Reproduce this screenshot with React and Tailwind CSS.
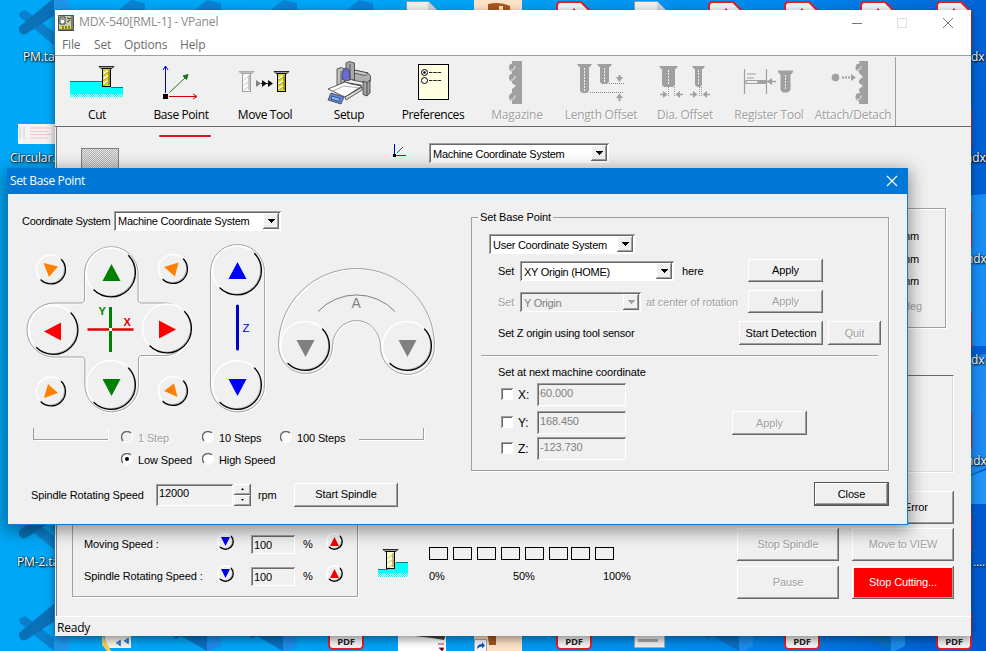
import React from 'react';

const RAISED =
  'bg-[#f0f0f0] shadow-[inset_-1px_-1px_0_#696969,inset_1px_1px_0_#ffffff,inset_-2px_-2px_0_#a0a0a0]';
const SUNKEN =
  'shadow-[inset_1px_1px_0_#a0a0a0,inset_-1px_-1px_0_#ffffff,inset_2px_2px_0_#696969]';

function Button({ children, disabled, className = '' }) {
  return (
    <button
      className={`${RAISED} flex shrink-0 items-center justify-center whitespace-nowrap ${
        disabled ? 'text-[#a0a0a0] [text-shadow:1px_1px_0_#fff]' : 'text-black'
      } ${className}`}
    >
      {children}
    </button>
  );
}

function Select({ children, disabled, className = '' }) {
  return (
    <div
      className={`${SUNKEN} flex h-5 shrink-0 items-center p-[2px] pl-1 tracking-[-0.27px] whitespace-nowrap ${
        disabled ? 'bg-[#f0f0f0] text-[#808080]' : 'bg-white text-black'
      } ${className}`}
    >
      <span className="flex-1 pt-[2px]">{children}</span>
      <span className={`${RAISED} flex h-4 w-4 items-center justify-center`}>
        <svg width="7" height="4" viewBox="0 0 7 4" shapeRendering="crispEdges">
          <path d="M0 0h7L3.5 4z" fill={disabled ? '#a0a0a0' : '#000'} />
        </svg>
      </span>
    </div>
  );
}

function Field({ children, disabled, className = '' }) {
  return (
    <div
      className={`${SUNKEN} shrink-0 bg-[#f0f0f0] pl-[3px] ${
        disabled ? 'text-[#808080]' : 'text-black'
      } ${className}`}
    >
      {children}
    </div>
  );
}

function Radio({ children, checked, disabled, className = '' }) {
  return (
    <label
      className={`flex shrink-0 items-center gap-[5px] whitespace-nowrap ${
        disabled ? 'text-[#a0a0a0] [text-shadow:1px_1px_0_#fff]' : 'text-black'
      } ${className}`}
    >
      <svg width="12" height="12" viewBox="0 0 12 12" className="mb-[2px]">
        <circle cx="6" cy="6" r="5" fill={disabled ? '#f0f0f0' : '#fff'} />
        <path d="M9.9 2.1A5.5 5.5 0 0 0 2.1 9.9" fill="none" stroke="#696969" strokeWidth="1.4" />
        <path d="M2.1 9.9A5.5 5.5 0 0 0 9.9 2.1" fill="none" stroke="#fff" strokeWidth="1" />
        {checked && <circle cx="6" cy="6" r="2" fill="#000" />}
      </svg>
      <span className="pt-px">{children}</span>
    </label>
  );
}

function RoundKey({ cx, cy, r }) {
  const a = r * 0.7071;
  return (
    <g fill="none">
      <circle cx={cx} cy={cy} r={r} fill="#f0f0f0" stroke="#fff" strokeWidth="1.5" />
      <path
        d={`M${cx + a} ${cy - a}A${r} ${r} 0 0 1 ${cx - a} ${cy + a}`}
        stroke="#b0b0b0"
        strokeWidth="1"
        transform="translate(-.8 -.8)"
      />
      <path d={`M${cx + a} ${cy - a}A${r} ${r} 0 0 1 ${cx - a} ${cy + a}`} stroke="#000" strokeWidth="1.3" />
    </g>
  );
}

function Outline({ d }) {
  return (
    <g fill="none">
      <path d={d} stroke="#fff" strokeWidth="1.2" transform="translate(1 1)" />
      <path d={d} stroke="#a5a29a" strokeWidth="1" />
    </g>
  );
}

function XYPad() {
  return (
    <svg width="180" height="178" viewBox="22 240 180 178" className="shrink-0">
      <Outline d="M84.500 301V273.500a26.800 26.800 0 0 1 53.600 0V301l2 2H167a26.500 26.500 0 0 1 0 52.500h-26.500l-2 2V385a26.800 26.800 0 0 1-53.600 0v-26l-2-2H54a27 27 0 0 1 0-54h28.500z" />
      <RoundKey cx={111} cy={272.5} r={24.5} />
      <RoundKey cx={53.5} cy={330} r={24.5} />
      <RoundKey cx={167} cy={328.5} r={24.5} />
      <RoundKey cx={111} cy={385} r={24.5} />
      <RoundKey cx={51} cy={269.500} r={14.5} />
      <RoundKey cx={173} cy={269} r={14.5} />
      <RoundKey cx={51} cy={391.500} r={14.5} />
      <RoundKey cx={173} cy={391} r={14.5} />
      <path d="M111.500 264l9 17h-18z" fill="#008000" />
      <path d="M111.500 396l9-17h-18z" fill="#008000" />
      <path d="M44 331.500l17-9v18z" fill="#f00" />
      <path d="M176 329.500l-17-9v18z" fill="#f00" />
      <g fill="#ff8000">
        <path d="M43.500 263l14.500 3.500-9 10.500z" />
        <path d="M164 267l14.500-4.500-3.500 14z" />
        <path d="M48 384l10 9-14 5z" />
        <path d="M174 383.500l-10 7.500 13.500 6z" />
      </g>
      <path d="M110.500 307v45" stroke="#008000" strokeWidth="3" />
      <path d="M87.500 329.500h46" stroke="#e00000" strokeWidth="2.500" />
      <rect x="109" y="328" width="3" height="3" fill="#fff" />
      <g fontFamily="Liberation Sans, sans-serif" fontWeight="bold" fontSize="11">
        <text x="98.500" y="315" fill="#008000">Y</text>
        <text x="123.500" y="326" fill="#e00000">X</text>
      </g>
    </svg>
  );
}

function ZPad() {
  return (
    <svg width="66" height="178" viewBox="202 240 66 178" className="shrink-0">
      <Outline d="M210.500 271.500a27 27 0 0 1 54 0V385a27 27 0 0 1-54 0z" />
      <RoundKey cx={237} cy={270.5} r={24.5} />
      <RoundKey cx={237} cy={385} r={24.5} />
      <path d="M237.500 262l9 17h-18z" fill="#00f" />
      <path d="M237.500 396l9-17h-18z" fill="#00f" />
      <path d="M237.500 306v43" stroke="#0000c8" strokeWidth="3" strokeLinecap="round" />
      <text x="242.500" y="332" fontFamily="Liberation Sans, sans-serif" fontSize="11.500" fill="#0000e0">
        Z
      </text>
    </svg>
  );
}

function APad() {
  return (
    <svg width="172" height="178" viewBox="268 240 172 178" className="shrink-0">
      <Outline d="M278.500 345.500A78 77 0 0 1 434.500 345.500a27 28 0 0 1-54 2A24 26 0 0 0 332.500 345.500a27 28 0 0 1-54 0z" />
      <RoundKey cx={305} cy={346} r={24.5} />
      <RoundKey cx={407} cy={346} r={24.5} />
      <path d="M305.500 357l9-17h-18z" fill="#808080" />
      <path d="M407.500 357l9-17h-18z" fill="#808080" />
      <path d="M318 311.500a53 53 0 0 1 77 0" fill="none" stroke="#808080" />
      <text x="351.500" y="308" fontFamily="Liberation Sans, sans-serif" fontSize="14" fill="#808080">
        A
      </text>
    </svg>
  );
}

function Mill({ x, y, w = 9, h = 19, body = '#ded82c', shade = '#8a8410', edge = '#000', cap = '#a0a0a0' }) {
  return (
    <g>
      <path d={`M${x - 3} ${y + 0.5}h${w + 6}l-2 2h-${w + 2}z`} fill={cap} stroke={edge} strokeWidth=".8" />
      <rect x={x + 0.5} y={y + 2.5} width={w - 1} height={h - 1} fill={body} stroke={edge} />
      <path d={`M${x + w - 2} ${y + 4}v${h - 4}`} stroke={shade} strokeWidth="1.500" />
      <path
        d={`M${x + 1.5} ${y + 8}l${w - 4.5} -3M${x + 1.5} ${y + 13}l${w - 4.5} -3M${x + 1.5} ${y + 18}l${w - 4.5} -3`}
        stroke="#fff"
        strokeWidth="1.600"
      />
      <path
        d={`M${x + 1.5} ${y + 9}l${w - 4.5} -3M${x + 1.5} ${y + 14}l${w - 4.5} -3M${x + 1.5} ${y + 19}l${w - 4.5} -3`}
        stroke={shade}
        strokeWidth=".7"
      />
    </g>
  );
}

function GreyMill({ x, y, w, h, cap }) {
  return (
    <g fill="#a0a0a0">
      <path d={`M${x - cap} ${y}h${w + 2 * cap}l-2 3h-${w + 2 * cap - 4}z`} />
      <path d={`M${x} ${y + 2}h${w}v${h - 4}l-2 2h-${w - 4}l-2-2z`} />
      <path d={`M${x + w / 2} ${y + 4}v${h - 6}`} stroke="#f0f0f0" strokeDasharray="2 1" />
    </g>
  );
}

const ICONS = {
  cut: (
    <>
      <defs>
        <pattern id="dots" width="2" height="2" patternUnits="userSpaceOnUse">
          <rect width="1" height="1" fill="#0ff" />
          <rect x="1" y="1" width="1" height="1" fill="#0ff" />
        </pattern>
      </defs>
      <path d="M70 81h32v6h21v7H70z" fill="#0ff" />
      <path d="M70 94h53v3.500H70z" fill="url(#dots)" />
      <path d="M70 81.500h32M111 87.500h12" stroke="#008080" />
      <Mill x={102} y={66} />
    </>
  ),
  base: (
    <>
      <path d="M165.500 93V67M163 70l2.500-4 2.500 4" stroke="#0000c0" fill="none" />
      <path d="M169.500 92.500L187 76M183 76l5-1.500-1.500 5z" stroke="#207020" fill="#207020" />
      <path d="M169 96.500h27M193 94l4 2.500-4 2.500" stroke="#d00000" fill="none" />
      <path d="M163 94h5v5h-5z" />
    </>
  ),
  move: (
    <>
      <Mill x={242} y={71} body="#f8f8f8" shade="#b8b8b8" edge="#a0a0a0" cap="#c0c0c0" />
      <path d="M256 80l5 3.500-5 3.500z" fill="#808080" />
      <path d="M261 83.500h10" stroke="#222" />
      <path d="M262 80l5 3.500-5 3.500zM268 80l5 3.500-5 3.500z" fill="#111" />
      <Mill x={277} y={71} />
    </>
  ),
  setup: (
    <g stroke="#3c3c3c" strokeWidth=".8" strokeLinejoin="round">
      <path d="M354 70l14 3 2.500 3v5l-4 2-14-3z" fill="#b0b0b0" />
      <path d="M354 70l14 3-3 2.500-13-3z" fill="#d0d0d0" />
      <path d="M363 81l4 1.500 3-2.500v13l-3 3-4-1.500z" fill="#a0a0a0" />
      <path d="M367 82.500v13" />
      <path d="M346 63l3.500-1.500 5 1.500v17l-8.500-1z" fill="#a8a8a8" />
      <path d="M350 64v15" />
      <path d="M337 69l4-1.500 4 1.500v10l-2 9-6-3z" fill="#c0c0c0" />
      <path d="M341 71v15" />
      <path d="M343 70l3-2 3 2 1 10-4 1-4-2z" fill="#6a6ad8" />
      <path d="M343 82l18 3-2 5-16 4z" fill="#707070" />
      <path d="M328 89l17-7 6 2 11 2-17 11z" fill="#fff" />
      <path d="M333 91l11-5 16 2" fill="none" stroke="#999" />
      <path d="M345 97l17-10v3l-16 10z" fill="#d8d8d8" />
      <path d="M331 93l13 4-3 7-13-4z" fill="#5f8cdc" />
      <path d="M332 96l8 2.500-1 3-8-2.500z" fill="#8fb4f0" stroke="#24407c" />
    </g>
  ),
  prefs: (
    <>
      <rect x="418.500" y="64.500" width="30" height="35" fill="#ffffe1" stroke="#000" />
      <circle cx="424.500" cy="72.500" r="3" fill="#fff" stroke="#000" />
      <circle cx="424.500" cy="72.500" r="1.300" />
      <circle cx="424.500" cy="80.500" r="3" fill="#fff" stroke="#000" />
      <path d="M429 72.500h13M429 80.500h13" stroke="#222" strokeDasharray="3.500 .8" />
    </>
  ),
  magazine: (
    <g fill="#a0a0a0">
      <path d="M512 61h10v43h-10v-4l2-3-2-4v-4l4-3-4-3v-3l3-3-3-3v-3l3-3-3-3z" />
      <circle cx="513" cy="67.500" r="4" />
      <circle cx="513" cy="77.500" r="4" />
      <circle cx="513" cy="97" r="4" />
      <path d="M511 70a3.500 3.500 0 0 0 4-4M511 80a3.500 3.500 0 0 0 4-4M511 99.500a3.500 3.500 0 0 0 4-4" fill="none" stroke="#f0f0f0" />
    </g>
  ),
  length: (
    <g fill="#a0a0a0">
      <GreyMill x={580} y={64} w={9} h={29} cap={3} />
      <GreyMill x={600} y={64} w={9} h={20} cap={3} />
      <path d="M609 83.500h15M590 92.500h34" stroke="#888" strokeDasharray="1 1" />
      <path d="M619.500 75v3M619.500 96v5" stroke="#a0a0a0" strokeWidth="2" />
      <path d="M616 77h7l-3.500 5zM616 98h7l-3.500-4.500z" />
    </g>
  ),
  dia: (
    <g fill="#a0a0a0">
      <GreyMill x={662} y={66} w={13} h={21} cap={3} />
      <GreyMill x={695} y={66} w={7} h={21} cap={3} />
      <path d="M668.500 87v10M674.500 87v10M699.500 87v10M701.500 87v10" stroke="#999" strokeDasharray="1 1" fill="none" />
      <path d="M660 94.500h4M679 94.500h4M690 94.500h4M706 94.500h4" stroke="#a0a0a0" strokeWidth="1.500" />
      <path d="M663 91l4.500 3.500-4.500 3.500zM680 91l-4.500 3.500 4.500 3.500zM693 91l4.500 3.500-4.500 3.500zM707 91l-4.500 3.500 4.500 3.500z" />
    </g>
  ),
  register: (
    <g stroke="#a0a0a0" fill="none">
      <path d="M744.500 69v25M766.500 69v25M746 80.500h12v3h-12zM747 74h9M747 78h7" strokeWidth="1.200" />
      <path d="M758 82h8" strokeWidth="4" />
      <path d="M767 81.500h9" strokeWidth="1.500" />
      <path d="M772 78l-5 3.500 5 3.500z" fill="#a0a0a0" stroke="none" />
      <GreyMill x={781} y={71} w={9} h={21} cap={3} />
    </g>
  ),
  attach: (
    <g fill="#a0a0a0">
      <circle cx="835.500" cy="77.500" r="3.800" />
      <path d="M842 77.500h9" stroke="#a0a0a0" strokeWidth="2" strokeDasharray="2 1" />
      <path d="M851 74l5 3.500-5 3.500z" />
      <path d="M859 61h9v43h-9v-6l2-4-2-3v-2l4-3-4-3v-3l4-3-4-4v-2l2-4z" />
      <circle cx="859.500" cy="67.500" r="4" />
      <circle cx="859.500" cy="97" r="4" />
      <path d="M857 70a3.500 3.500 0 0 0 4-4M857 99.500a3.500 3.500 0 0 0 4-4" fill="none" stroke="#f0f0f0" />
    </g>
  ),
};

const TOOLS = [
  ['Cut', 'cut', '54 57 84 49', false],
  ['Base Point', 'base', '138 57 84 49', false],
  ['Move Tool', 'move', '222 57 84 49', false],
  ['Setup', 'setup', '306 57 84 49', false],
  ['Preferences', 'prefs', '390 57 84 49', false],
  ['Magazine', 'magazine', '474 57 84 49', true],
  ['Length Offset', 'length', '558 57 84 49', true],
  ['Dia. Offset', 'dia', '642 57 84 49', true],
  ['Register Tool', 'register', '726 57 84 49', true],
  ['Attach/Detach', 'attach', '810 57 84 49', true],
];

function Toolbar() {
  return (
    <div className="flex h-[71px] shrink-0 border-b border-[#696969] pt-px">
      <div className="flex border-r border-[#a0a0a0]">
        {TOOLS.map(([label, icon, box, disabled]) => (
          <div
            key={label}
            className={`flex w-[84px] flex-col items-center font-[Open_Sans,Noto_Sans,sans-serif] text-[12px] leading-[18px] whitespace-nowrap ${
              disabled ? 'tracking-[-0.25px] text-[#a0a0a0] [text-shadow:1px_1px_0_#fff]' : 'tracking-[-0.4px] text-black'
            }`}
          >
            <svg width="84" height="49" viewBox={box} className="-ml-[2px] shrink-0">
              {ICONS[icon]}
            </svg>
            <span>{label}</span>
          </div>
        ))}
      </div>
    </div>
  );
}

function Override({ label, className }) {
  return (
    <div className={`flex h-8 items-center ${className}`}>
      <span className="w-[133px] pt-px whitespace-nowrap">{label}</span>
      <svg width="18" height="18" viewBox="0 0 18 18" className="mb-1">
        <RoundKey cx={8.5} cy={8.5} r={7.8} />
        <path d="M8.500 13L4 4h9z" fill="#0000e8" />
      </svg>
      <Field className="ml-4 h-[19px] w-[44px] leading-[20px]">100</Field>
      <span className="ml-2 w-[23px] pt-px">%</span>
      <svg width="18" height="18" viewBox="0 0 18 18" className="mb-1">
        <RoundKey cx={8.5} cy={8.5} r={7.8} />
        <path d="M8.500 4L13 13H4z" fill="#f00000" />
      </svg>
    </div>
  );
}

function MainWindow() {
  return (
    <div className="absolute top-[10px] left-[55px] flex h-[626px] w-[916px] flex-col bg-[#f0f0f0] shadow-[0_3px_9px_rgba(0,0,0,0.45)]">
      <div className="flex h-[46px] shrink-0 flex-col border-b border-[#a0a0a0] bg-white font-[Open_Sans,Noto_Sans,sans-serif] text-[12px] text-[#8c8c8c]">
        <div className="flex h-[25px] items-center pl-[3px]">
          <svg width="16" height="16" viewBox="0 0 16 16">
            <rect x=".5" y=".5" width="15" height="15" fill="#c8ccae" stroke="#555" />
            <path d="M2 2h5v7H2z" fill="#fff" stroke="#333" />
            <path d="M3 4h3M9 3l4 1M9 7l3-2" stroke="#333" />
            <path d="M2 11h12v3H2z" fill="#e5dc30" />
            <path d="M5 11v3M8 11v3M11 11v3M14 1v14H1" stroke="#333" fill="none" />
          </svg>
          <span className="ml-[5px] flex-1 text-[12.200px] tracking-[-0.22px]">MDX-540[RML-1] - VPanel</span>
          <svg width="104" height="12" viewBox="0 0 104 12" className="mr-[17px] shrink-0" fill="none">
            <path d="M2 6.500h10" stroke="#777" />
            <rect x="47.500" y="1.500" width="9" height="9" stroke="#dedede" />
            <path d="M93 1l10 10M103 1L93 11" stroke="#777" />
          </svg>
        </div>
        <div className="flex h-5 items-center pl-[7px] text-[12px] tracking-[-0.15px] text-[#6c6c6c]">
          <span className="w-8">File</span>
          <span className="w-[30px]">Set</span>
          <span className="w-[56px]">Options</span>
          <span>Help</span>
        </div>
      </div>
      <Toolbar />
      <div className="mr-[2px] ml-px flex flex-1 flex-col border-l border-[#808080]">
        <div className="flex h-[41px] shrink-0 pl-6">
          <svg width="38" height="20" className="mt-[21px]" shapeRendering="crispEdges">
            <defs>
              <pattern id="mesh" width="2" height="2" patternUnits="userSpaceOnUse">
                <rect width="2" height="2" fill="#e4e4e4" />
                <rect width="1" height="1" fill="#b4b4b4" />
                <rect x="1" y="1" width="1" height="1" fill="#b4b4b4" />
              </pattern>
            </defs>
            <rect x=".5" y=".5" width="37" height="24" fill="url(#mesh)" stroke="#808080" />
          </svg>
          <div className="mt-[8px] ml-[40px] h-[2px] w-[52px] rounded-full bg-[#e01020]" />
          <svg width="15" height="15" viewBox="392 143 15 15" className="mt-[16px] ml-[181px]">
            <path d="M394.500 144v10" stroke="#0000c0" />
            <path d="M397 153l6-6" stroke="#207020" />
            <path d="M396 155.500h10" stroke="#d00000" />
            <path d="M393 154h3v3h-3z" />
          </svg>
          <Select className="mt-[16px] ml-[22px] w-[180px]">Machine Coordinate System</Select>
        </div>
        <div className="flex h-[356px] shrink-0 flex-col items-end pr-[15px]">
          <div className="mt-[40px] mr-[8px] flex h-[120px] w-[150px] flex-col items-end border border-[#a0a0a0] pt-[16px] pr-[26px] leading-[22.500px] shadow-[1px_1px_0_#fff,inset_1px_1px_0_#fff]">
            <span>mm</span>
            <span>mm</span>
            <span>mm</span>
            <span className="-mr-[3px] pt-[2px] text-[#a0a0a0]">deg</span>
          </div>
          <div className="mt-[47px] h-[98px] w-[150px] border-t border-r border-b border-[#696969] border-r-white border-b-white shadow-[inset_-1px_-1px_0_#dcdcdc]" />
          <Button className="mt-[18px] h-[33px] w-[102px] pl-[26px]">Error</Button>
        </div>
        <div className="flex flex-1 pl-[15px]">
          <div className="h-[73px] w-[286px] border-r border-b border-l border-[#a0a0a0] pl-[11px] shadow-[1px_1px_0_#fff]">
            <Override label="Moving Speed :" className="mt-[4px]" />
            <Override label="Spindle Rotating Speed :" />
          </div>
          <svg width="32" height="30" viewBox="377 548 32 30" className="mt-[24px] ml-[19px]">
            <path d="M378 569h17v-6h13v10h-30z" fill="#0ff" />
            <path d="M378 573h30v4h-30z" fill="url(#dots)" />
            <path d="M378 569.500h10M396 562.500h12" stroke="#008080" />
            <Mill x={386} y={549} body="#ffffb8" shade="#a8a050" h={18} />
          </svg>
          <div className="mt-[23px] ml-[20px] w-[206px]">
            <div className="flex gap-[5px]">
              {[0, 1, 2, 3, 4, 5, 6, 7].map((n) => (
                <span key={n} className={`h-[13px] w-[19px] border border-black ${n === 6 ? '-ml-[2px]' : ''}`} />
              ))}
            </div>
            <div className="mt-[8px] flex leading-[16px]">
              <span className="w-[84px]">0%</span>
              <span className="w-[90px]">50%</span>
              <span>100%</span>
            </div>
          </div>
          <div className="mt-[4px] ml-[102px] grid grid-cols-[102px_102px] content-start gap-x-[13px] gap-y-[5px]">
            <Button disabled className="h-[33px] pb-px">Stop Spindle</Button>
            <Button disabled className="h-[33px] pb-px">Move to VIEW</Button>
            <Button disabled className="h-[33px] pb-px">Pause</Button>
            <div className={`${RAISED} flex h-[33px] p-[2px]`}>
              <span className="flex flex-1 items-center justify-center bg-[#ff0000] text-white">Stop Cutting...</span>
            </div>
          </div>
        </div>
      </div>
      <div className="flex h-5 shrink-0 items-center border-t border-white pl-[2px] font-[Open_Sans,Noto_Sans,sans-serif] text-[12px] tracking-[-0.2px]">
        <span className="pt-[2px]">Ready</span>
      </div>
    </div>
  );
}

function CoordRow({ axis, value, className }) {
  return (
    <div className={`flex items-center ${className}`}>
      <span className={`${SUNKEN} mb-[2px] h-3 w-3 bg-white`} />
      <span className="w-[24px] pl-[5px] text-[12px]">{axis}:</span>
      <Field disabled className="h-[23px] w-[89px] leading-[20px]">{value}</Field>
    </div>
  );
}

function JogPanel() {
  return (
    <div className="w-[463px] shrink-0 pt-[16px]">
      <div className="flex h-[21px] items-center pl-[14px]">
        <span className="w-[92px] pt-px tracking-[-0.3px] whitespace-nowrap">Coordinate System</span>
        <Select className="w-[167px]">Machine Coordinate System</Select>
      </div>
      <div className="mt-[9px] flex pl-[14px]">
        <XYPad />
        <ZPad />
        <APad />
      </div>
      <div className="mt-[8px] flex h-[44px] pl-[25px]">
        <span className="mt-[2px] h-[12px] w-[75px] border-b border-l border-[#a0a0a0] shadow-[1px_1px_0_#fff]" />
        <div className="ml-[13px] grid grid-cols-[81px_78px_81px] grid-rows-[22px_22px] pt-px">
          <Radio disabled>1 Step</Radio>
          <Radio>10 Steps</Radio>
          <Radio>100 Steps</Radio>
          <Radio checked>Low Speed</Radio>
          <Radio>High Speed</Radio>
        </div>
        <span className="mt-[2px] -ml-[2px] h-[12px] w-[65px] border-r border-b border-[#a0a0a0] shadow-[1px_1px_0_#fff]" />
      </div>
      <div className="mt-[12px] flex h-[25px] items-center pl-[23px]">
        <span className="w-[125px] pt-px whitespace-nowrap">Spindle Rotating Speed</span>
        <Field className="h-[22px] w-[77px] leading-[19px]">12000</Field>
        <div className="ml-px flex w-[17px] flex-col">
          <span className={`${RAISED} flex h-[11px] items-center justify-center`}>
            <svg width="3" height="2"><path d="M0 2h3L1.500 0z" /></svg>
          </span>
          <span className={`${RAISED} flex h-[11px] items-center justify-center`}>
            <svg width="3" height="2"><path d="M0 0h3L1.500 2z" /></svg>
          </span>
        </div>
        <span className="ml-[7px] w-[36px] pt-px">rpm</span>
        <Button className="h-[24px] w-[104px]">Start Spindle</Button>
      </div>
    </div>
  );
}

function BasePointPanel() {
  return (
    <div className="flex flex-1 flex-col items-start pt-[15px]">
      <fieldset className="h-[262px] w-[418px] shrink-0 border border-[#a0a0a0] pl-[10px] shadow-[1px_1px_0_#fff]">
        <legend className="-ml-[4px] px-[2px] pt-px leading-[15px]">Set Base Point</legend>
        <Select className="mt-[9px] ml-[7px] w-[146px]">User Coordinate System</Select>
        <div className="mt-[5px] flex h-[24px] items-center pl-[16px]">
          <span className="w-[22px]">Set</span>
          <Select className="w-[154px]">XY Origin (HOME)</Select>
          <span className="ml-[8px] w-[66px]">here</span>
          <Button className="mb-[2px] h-[23px] w-[75px]">Apply</Button>
        </div>
        <div className="mt-[7px] flex h-[24px] items-center pl-[16px] text-[#a0a0a0]">
          <span className="w-[22px] [text-shadow:1px_1px_0_#fff]">Set</span>
          <Select disabled className="w-[121px]">Y Origin</Select>
          <span className="ml-[5px] w-[102px] whitespace-nowrap [text-shadow:1px_1px_0_#fff]">at center of rotation</span>
          <Button disabled className="mb-[2px] h-[23px] w-[75px]">Apply</Button>
        </div>
        <div className="mt-[7px] flex h-[24px] items-center pl-[16px]">
          <span className="w-[241px] pt-px tracking-[-0.2px]">Set Z origin using tool sensor</span>
          <Button className="h-[24px] w-[84px]">Start Detection</Button>
          <Button disabled className="ml-[5px] h-[24px] w-[53px]">Quit</Button>
        </div>
        <div className="mt-[10px] -ml-px h-px w-[397px] bg-[#a0a0a0] shadow-[0_1px_0_#fff]" />
        <div className="mt-[8px] pl-[16px] leading-[16px]">Set at next machine coordinate</div>
        <div className="mt-[3px] flex pl-[19px]">
          <div>
            <CoordRow axis="X" value="60.000" />
            <CoordRow axis="Y" value="168.450" className="mt-[5px]" />
            <CoordRow axis="Z" value="-123.730" className="mt-[3px]" />
          </div>
          <Button disabled className="mt-[28px] ml-[106px] h-[24px] w-[75px]">Apply</Button>
        </div>
      </fieldset>
      <div className="mt-[11px] ml-[343px] border border-[#555]">
        <Button className="h-[22px] w-[73px]">Close</Button>
      </div>
    </div>
  );
}

function BasePointDialog() {
  return (
    <div className="absolute top-[168px] left-[7px] flex h-[357px] w-[901px] flex-col border border-[#1a78c8] bg-[#f0f0f0] shadow-[0_4px_16px_2px_rgba(0,0,0,0.4)]">
      <div className="-mx-px -mt-px flex h-[26px] shrink-0 items-center bg-[#0078d7] pl-[3px] font-[Open_Sans,Noto_Sans,sans-serif] text-[12px] tracking-[-0.35px] text-white">
        <span className="flex-1">Set Base Point</span>
        <svg width="12" height="12" viewBox="0 0 12 12" className="mr-[10px]">
          <path d="M1 1l10 10M11 1L1 11" stroke="#fff" strokeWidth="1.200" />
        </svg>
      </div>
      <div className="flex flex-1">
        <JogPanel />
        <BasePointPanel />
      </div>
    </div>
  );
}

function CodeLogo({ x, y }) {
  return (
    <g transform={`translate(${x} ${y})`}>
      <path d="M-36 12l6-3 30 23v13l-35-29z" fill="#0b7fcb" />
      <path d="M-36 30v-4L0-4V14l-29 19-4 .500z" fill="#0a70b8" />
      <path d="M-1-12l15 8v54l-15 8z" fill="#1d96ea" />
    </g>
  );
}

function PdfPage({ x, y }) {
  return (
    <g transform={`translate(${x} ${y})`}>
      <path d="M-17 5q0-4 4-4h20l10 10v34q0 3-4 3h-26q-4 0-4-3z" fill="#f4f4f4" stroke="#e0202a" strokeWidth="2" />
      <path d="M-1 11q1-6 2 0" stroke="#e0202a" fill="none" strokeWidth="1.500" />
    </g>
  );
}

function Desktop() {
  return (
    <svg className="absolute inset-0" width="986" height="651" viewBox="0 0 986 651">
      <path d="M955 360l31-6v114l-31 14z" fill="#2aa0ff" opacity=".7" />
      <path d="M960 196l26-2v152h-26z" fill="#209cff" opacity=".75" />
      <path d="M960 480l26-10v34h-26z" fill="#2aa4ff" opacity=".8" />
      <CodeLogo x={55} y={1} />
      <CodeLogo x={55} y={505} />
      <CodeLogo x={55} y={607} />
      {[131, 207, 283, 359].map((x) => (
        <path key={x} d={`M${x - 12} 10l12-10 14 3v7z`} fill="#0a82d2" />
      ))}
      {[207, 283, 739, 891].map((x) => (
        <g key={x}>
          <path d={`M${x - 36} 634l5 5 5-3 26 15v-17z`} fill="#0a70c0" />
          <path d={`M${x} 634h14v12l-14 7z`} fill="#1d8cec" />
        </g>
      ))}
      <path d="M406.500 1.500h21l10 9h-31zM634.500 1.500h22l9 9h-31z" fill="#f0f0f0" stroke="#999" />
      <path d="M428 1v9h9M657 1v9h9" fill="#d4d4d4" />
      <path d="M474 0h48v10h-48z" fill="#fce3c8" />
      <path d="M488 10V4q12-3 22 2v4h-7V6h-4v4z" fill="#a7581c" />
      {[574, 726, 802, 878, 954].map((x) => <PdfPage key={x} x={x} y={1} />)}
      {[102, 203, 304, 405, 506].map((y) => (
        <path key={y} d={`M971.500 ${y + 8}v36`} stroke="#c03048" />
      ))}
      {[346, 574, 802, 954].map((x) => (
        <g key={x}>
          <rect x={x - 17} y="610" width="34" height="39" rx="4" fill="#f4f4f4" stroke="#e0202a" strokeWidth="2" />
          <text x={x} y="644.500" textAnchor="middle" fontFamily="Open Sans, sans-serif" fontWeight="bold" fontSize="9.500" letterSpacing="-.3" fill="#222">
            PDF
          </text>
        </g>
      ))}
      <path d="M103 630h28v18h-24z" fill="#f8f4e8" />
      <path d="M102 634l9 17h-4l-5-6z" fill="#f0d060" />
      <path d="M117 643l3 2v-4zM125 641l3 2v-4z" stroke="#1670c8" fill="none" strokeWidth="1.500" />
      <path d="M398 630h48v21h-48z" fill="#fff" />
      <path d="M398 634h48l-2 6-12-2z" fill="#444" />
      <path d="M438 644h6M439 648h5l-2 3" stroke="#c02040" />
      <path d="M474 630h48v21h-48z" fill="#fce3c8" />
      <path d="M487 630h9v15h-7z" fill="#a7581c" />
      <path d="M474.500 639.500h12v12h-12z" fill="#f4f8ff" stroke="#aaa" />
      <path d="M477 649q0-5 5-5v-2l3 3.500-3 3v-2q-3 0-5 2.500z" fill="#1858b0" />
      <path d="M634.500 630h30v17.500h-30z" fill="#f0f0f0" stroke="#aaa" />
      <path d="M638 640.500h20" stroke="#aaa" strokeWidth="3" />
      <path d="M18 124h37v20H18z" fill="#f4f2f2" />
      <path d="M30 128h20M30 131.500h18M30 134.500h22M30 138h18" stroke="#ecc8c8" />
      <path d="M20 127v12M24 127v12" stroke="#d0d0d8" />
    </svg>
  );
}

const LABELS = [
  ['PM.ta', 'top-[48px] left-[23px] w-[40px]'],
  ['Circular.', 'top-[149px] left-[10px] w-[50px]'],
  ['PM-2.ta', 'top-[553px] left-[17px] w-[50px]'],
  ['dx', 'top-[48px] left-[971px] w-[15px]'],
  ['ndx', 'top-[149px] left-[965px] w-[21px]'],
  ['ndx', 'top-[250px] left-[966px] w-[20px]'],
  ['dx', 'top-[351px] left-[971px] w-[15px]'],
  ['ndx', 'top-[452px] left-[966px] w-[20px]'],
  ['....', 'top-[553px] left-[973px] w-[13px]'],
];

export default function App() {
  return (
    <div className="relative h-[651px] w-[986px] overflow-hidden bg-[linear-gradient(95deg,#00a8f8_0%,#00a2f4_45%,#0088ec_75%,#0058d0_100%)] font-[Liberation_Sans,Arial,sans-serif] text-[11px] tracking-[-0.13px] text-black">
      <Desktop />
      {LABELS.map(([text, place], i) => (
        <span
          key={i}
          className={`absolute overflow-hidden font-[Open_Sans,Noto_Sans,sans-serif] text-[12px] leading-[18px] whitespace-nowrap text-white [text-shadow:1px_1px_2px_#000,0_0_2px_#000] ${place}`}
        >
          {text}
        </span>
      ))}
      <MainWindow />
      <BasePointDialog />
    </div>
  );
}
